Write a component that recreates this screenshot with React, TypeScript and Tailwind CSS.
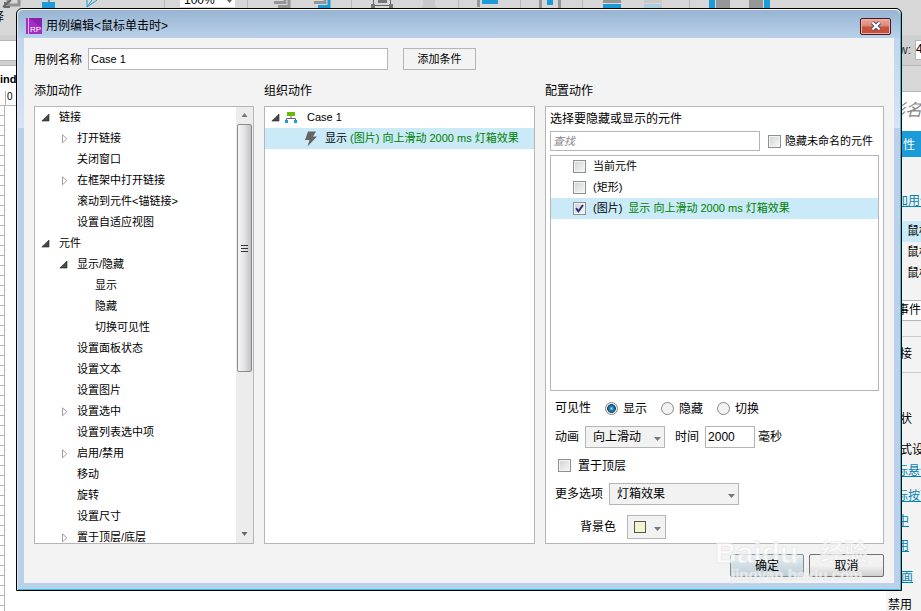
import React, { useState } from 'react';
import clsx from 'clsx';

type TreeItem = { label: string; level: 0 | 1 | 2; state?: 'open' | 'closed' };

const ACTIONS: TreeItem[] = [
  { label: '链接', level: 0, state: 'open' },
  { label: '打开链接', level: 1, state: 'closed' },
  { label: '关闭窗口', level: 1 },
  { label: '在框架中打开链接', level: 1, state: 'closed' },
  { label: '滚动到元件<锚链接>', level: 1 },
  { label: '设置自适应视图', level: 1 },
  { label: '元件', level: 0, state: 'open' },
  { label: '显示/隐藏', level: 1, state: 'open' },
  { label: '显示', level: 2 },
  { label: '隐藏', level: 2 },
  { label: '切换可见性', level: 2 },
  { label: '设置面板状态', level: 1 },
  { label: '设置文本', level: 1 },
  { label: '设置图片', level: 1 },
  { label: '设置选中', level: 1, state: 'closed' },
  { label: '设置列表选中项', level: 1 },
  { label: '启用/禁用', level: 1, state: 'closed' },
  { label: '移动', level: 1 },
  { label: '旋转', level: 1 },
  { label: '设置尺寸', level: 1 },
  { label: '置于顶层/底层', level: 1, state: 'closed' },
];

const INDENT = { 0: 'pl-1.5', 1: 'pl-6', 2: 'pl-[42px]' };

const Twisty = ({ state }: { state?: 'open' | 'closed' }) => (
  <svg width="10" height="10" viewBox="0 0 10 10" className="shrink-0">
    {state === 'open' && <path d="M8 1V8H0.8Z" fill="#4a4a4a" stroke="#222" strokeWidth="0.6" />}
    {state === 'closed' && <path d="M3.5 0.8V8.8L7.8 4.8Z" fill="#fff" stroke="#a0a0a0" />}
  </svg>
);

const DownArrow = () => (
  <svg width="9" height="5" viewBox="0 0 9 5" className="pointer-events-none absolute top-1/2 right-[3px]">
    <path d="M1 0H8L4.5 4Z" fill="#777" />
  </svg>
);

const CheckBox = ({ id, checked, onChange }: { id: string; checked: boolean; onChange: () => void }) => (
  <span className="relative size-[13px] shrink-0">
    <input
      id={id}
      type="checkbox"
      checked={checked}
      onChange={onChange}
      className="block size-[13px] appearance-none border border-[#8e8f8f] bg-linear-to-br from-[#cfd2d6] to-[#f8f8f8] shadow-[inset_0_0_0_1px_#f4f4f4]"
    />
    {checked && (
      <svg viewBox="0 0 13 13" className="pointer-events-none absolute inset-0 size-[13px]">
        <path d="M3 6.2L5.4 9.4L10 3" fill="none" stroke="#2b3177" strokeWidth="2" />
      </svg>
    )}
  </span>
);

const Panel = ({ title, className, children }: { title: string; className?: string; children: React.ReactNode }) => (
  <section className="flex min-h-0 min-w-0 flex-col">
    <h2 className="h-[26px] text-xs leading-[22px]">{title}</h2>
    <div className={clsx('flex min-h-0 flex-1 overflow-hidden border border-[#b5b5b5] bg-white', className)}>{children}</div>
  </section>
);

const ScrollBar = () => (
  <div className="flex w-[17px] shrink-0 flex-col items-center bg-[#ececec]">
    <svg width="7" height="17" viewBox="0 0 7 17"><path d="M0.5 10H6.5L3.5 6Z" fill="#777" /></svg>
    <div className="flex h-[248px] w-[15px] items-center justify-center rounded-xs border border-[#8b8b8b] bg-linear-to-r from-[#f6f6f6] via-[#e3e3e4] to-[#bfc1c4]">
      <svg width="7" height="9" viewBox="0 0 7 9"><path d="M0 1.5H7M0 4.5H7M0 7.5H7" stroke="#333" /></svg>
    </div>
    <svg width="7" height="17" viewBox="0 0 7 17" className="mt-auto"><path d="M0.5 6H6.5L3.5 10Z" fill="#666" /></svg>
  </div>
);

const Separator = ({ className }: { className: string }) => <span className={clsx('h-2 w-px shrink-0 bg-[#b8b8b8]', className)} />;

// Toolbar of the main window, behind the dialog
const Toolbar = () => (
  <div className="h-[35px] shrink-0 overflow-hidden bg-[#d7d7d7]">
    <div className="flex h-2.5 items-start">
      <svg width="20" height="8" viewBox="0 0 20 8" className="ml-0.5 shrink-0">
        <path d="M6 0V5H17V0" fill="none" stroke="#929292" strokeWidth="3" />
        <path d="M1 7L9 0M3 2V7H8" fill="none" stroke="#666" strokeWidth="2" />
      </svg>
      <svg width="14" height="8" viewBox="0 0 14 8" className="ml-5 shrink-0"><path d="M0 2H13V8H0Z" fill="#1b9bd8" /><path d="M6 0H8V2H6Z" fill="#888" /></svg>
      <svg width="12" height="8" viewBox="0 0 12 8" className="ml-[30px] shrink-0"><path d="M1 0V7L11 0M1 7L6 0" fill="none" stroke="#1b9bd8" /></svg>
      <Separator className="ml-[66px]" />
      <div className="ml-[15px] flex h-[7px] w-[55px] shrink-0 items-end overflow-hidden bg-white pl-1 text-xs leading-[14px]">
        100%<svg width="5" height="7" viewBox="0 0 5 7" className="ml-3"><path d="M0 0H5L2.5 3Z" fill="#666" /></svg>
      </div>
      <Separator className="ml-3" />
      <svg width="17" height="8" viewBox="0 0 17 8" className="ml-[26px] shrink-0"><path d="M0 2.5H11V0M4 6.5H15V0" fill="none" stroke="#969696" strokeWidth="3" /></svg>
      <svg width="17" height="8" viewBox="0 0 17 8" className="ml-[23px] shrink-0"><path d="M0 2.5H11V0" fill="none" stroke="#969696" strokeWidth="3" /><path d="M4 6.5H15V0" fill="none" stroke="#1b9bd8" strokeWidth="3" /></svg>
      <Separator className="ml-5" />
      <svg width="22" height="8" viewBox="0 0 22 8" className="ml-[19px] shrink-0"><path d="M2.5 0V5.5H19.5V0" fill="none" stroke="#666" /><path d="M7 0H16V3H7ZM0 4H4V8H0ZM18 4H22V8H18Z" fill="#777" /></svg>
      <svg width="14" height="8" viewBox="0 0 14 8" className="ml-[29px] shrink-0"><path d="M1 0H13V6H14V8H0V6H1Z" fill="#c9c9c9" /></svg>
      <Separator className="ml-[22px]" />
      <svg width="22" height="8" viewBox="0 0 22 8" className="ml-[18px] shrink-0"><path d="M0 0H3V7H0Z" fill="#969696" /><path d="M5 0H21V4H5Z" fill="#1b9bd8" /></svg>
      <Separator className="ml-[21px]" />
      <svg width="22" height="8" viewBox="0 0 22 8" className="ml-[18px] shrink-0"><path d="M0 0H3V8H0ZM19 0H22V8H19Z" fill="#969696" /><path d="M8 0H14V5H8Z" fill="#1b9bd8" /></svg>
      <Separator className="ml-[21px]" />
      <svg width="18" height="8" viewBox="0 0 18 8" className="ml-5 shrink-0"><path d="M0 0H18V3H0Z" fill="#969696" /><path d="M0 4H18V8H0Z" fill="#1b9bd8" /></svg>
      <svg width="18" height="8" viewBox="0 0 18 8" className="ml-[23px] shrink-0"><path d="M0 0H18V3H0Z" fill="#c9c9c9" /><path d="M0 4H18V8H0Z" fill="#adcfdd" /></svg>
      <Separator className="ml-[27px]" />
      <svg width="21" height="8" viewBox="0 0 21 8" className="ml-[19px] shrink-0"><path d="M0 0H6V8H0Z" fill="#1b9bd8" /><path d="M7 0H21V8H7Z" fill="#969696" /></svg>
      <svg width="21" height="8" viewBox="0 0 21 8" className="ml-[19px] shrink-0"><path d="M0 0H14V8H0Z" fill="#969696" /><path d="M15 0H21V8H15Z" fill="#1b9bd8" /></svg>
    </div>
    <div className="flex w-1 justify-end overflow-hidden leading-[14px]">择</div>
  </div>
);

const Workspace = () => (
  <div className="flex h-full flex-col overflow-hidden bg-white text-xs whitespace-nowrap">
    <Toolbar />
    <div className="flex h-[31px] shrink-0 items-center justify-between border-b border-[#b5b5b5] bg-[#cfcfcf]">
      <span className="h-[21px] w-12 border-y border-[#b5b5b5] bg-white" />
      <span className="flex items-center gap-1 text-[#333]">w:<span className="h-5 w-1.5 overflow-hidden border border-r-0 border-[#b5b5b5] bg-white text-black">4</span></span>
    </div>
    <div className="flex min-h-0 flex-1">
      <div className="flex min-w-0 flex-1 flex-col">
        <div className="h-[25px] text-[11px] leading-[26px] font-bold">index</div>
        <div className="flex h-[15px] border-b border-[#b5b5b5] pl-[5px]"><span className="border-l border-[#b5b5b5] pl-px text-[10px] leading-3">0</span></div>
        <div className="w-[5px] flex-1 border-r border-[#b5b5b5] bg-[repeating-linear-gradient(to_bottom,#fff_0,#fff_9px,#b5b5b5_9px,#b5b5b5_10px)]" />
      </div>
      <aside className="flex w-[35px] shrink-0 flex-col overflow-hidden bg-[#f3f3f3] *:shrink-0">
        <div className="h-[26px] border-b border-[#b5b5b5] bg-[#d8d8d8]" />
        <div className="h-[39px] bg-white pl-0.5 text-[17px] leading-[38px] text-[#888] italic">形名</div>
        <div className="h-[26px] bg-[#1b9bd8] pl-[5px] leading-[28px] text-white">属性</div>
        <a href="#case" className="mt-[34px] h-5 pl-2.5 leading-5 text-[#0083b3] underline">加用例</a>
        <ul className="mt-2.5 leading-[21px]">
          <li className="bg-[#c9eaf6] pl-[21px]">鼠标</li>
          <li className="pl-[21px]">鼠标</li>
          <li className="pl-[21px]">鼠标</li>
        </ul>
        <div className="mt-4 h-[21px] border-y border-[#b5b5b5] bg-white pl-[11px] leading-[19px]">事件</div>
        <div className="mt-[15px] h-[37px] border-y border-[#ccc] pl-3.5 leading-[35px]">接</div>
        <div className="mt-9 h-[21px] pl-3.5 leading-[21px]">状</div>
        <div className="mt-2.5 h-[21px] pl-3.5 leading-[21px]">式设</div>
        <a href="#hover" className="h-[25px] pl-2.5 leading-[21px] text-[#0083b3] underline">标悬停</a>
        <a href="#down" className="h-[25px] pl-2.5 leading-[21px] text-[#0083b3] underline">标按下</a>
        <a href="#selected" className="h-[25px] pl-[11px] leading-[21px] text-[#0083b3] underline">中</a>
        <a href="#disabled" className="h-[31px] pl-[11px] leading-[21px] text-[#0083b3] underline">用</a>
        <a href="#page" className="h-7 pl-[15px] leading-[21px] text-[#0083b3] underline">面</a>
        <div className="pl-0.5 leading-[21px]">禁用</div>
      </aside>
    </div>
  </div>
);

const ActionTree = () => (
  <Panel title="添加动作">
    <ul className="min-w-0 flex-1 text-[11px]">
      {ACTIONS.map((item, i) => (
        <li key={i} className={clsx('flex h-[21px] items-center gap-2', INDENT[item.level])}>
          <Twisty state={item.state} />
          {item.label}
        </li>
      ))}
    </ul>
    <ScrollBar />
  </Panel>
);

const CaseTree = () => (
  <Panel title="组织动作">
    <ul className="min-w-0 flex-1 text-[11px] whitespace-nowrap">
      <li className="flex h-[21px] items-center pl-1.5">
        <Twisty state="open" />
        <svg width="12" height="12" viewBox="0 0 12 12" className="ml-1 shrink-0">
          <path d="M2 0H10V4H2Z" fill="#6cb80e" />
          <path d="M6 4V6.5M1.5 9V6.5H10.5V9" fill="none" stroke="#666" />
          <path d="M0 8H3V11H0ZM9 8H12V11H9Z" fill="#1b9bd8" />
        </svg>
        <span className="ml-2.5">Case 1</span>
      </li>
      <li className="flex h-[21px] items-center bg-[#c9eaf6] pl-10">
        <svg width="12" height="16" viewBox="0 0 12 16" className="shrink-0">
          <path d="M3 0.5H11L8 5.5H12L2.5 15.5L4.5 9H0Z" fill="#646464" />
        </svg>
        <span className="ml-2">显示 <span className="text-[#008000]">(图片) 向上滑动 2000 ms 灯箱效果</span></span>
      </li>
    </ul>
  </Panel>
);

const ConfigPanel = () => {
  const [picked, setPicked] = useState([false, false, true]);
  const [hideUnnamed, setHideUnnamed] = useState(false);
  const [onTop, setOnTop] = useState(false);
  const [visibility, setVisibility] = useState('显示');
  const toggle = (i: number) => setPicked(picked.map((p, n) => (n === i ? !p : p)));

  return (
    <Panel title="配置动作" className="flex-col px-1 pb-1 text-xs whitespace-nowrap">
      <div className="h-6 leading-6">选择要隐藏或显示的元件</div>
      <div className="flex items-center text-[11px]">
        <input aria-label="查找" placeholder="查找" className="h-5 w-[210px] min-w-0 border border-[#b5b5b5] px-0.5 italic placeholder:text-[#888]" />
        <label htmlFor="unnamed" className="ml-2 flex items-center gap-1">
          <CheckBox id="unnamed" checked={hideUnnamed} onChange={() => setHideUnnamed(!hideUnnamed)} />
          隐藏未命名的元件
        </label>
      </div>
      <ul className="mt-1 min-h-0 flex-1 overflow-hidden border border-[#b5b5b5] text-[11px]">
        {['当前元件', '(矩形)', '(图片)'].map((name, i) => (
          <li key={name} className={clsx('flex h-[21px] items-center pl-[22px]', picked[i] && 'bg-[#c9eaf6]')}>
            <CheckBox id={`widget-${i}`} checked={picked[i]} onChange={() => toggle(i)} />
            <label htmlFor={`widget-${i}`} className="ml-[7px]">{name}</label>
            {i === 2 && <span className="ml-1.5 text-[#008000]">显示 向上滑动 2000 ms 灯箱效果</span>}
          </li>
        ))}
      </ul>

      <fieldset className="mt-[7px] flex h-[21px] items-center pl-[5px]">
        <legend className="float-left mr-3.5 leading-[21px]">可见性</legend>
        <div className="flex items-center gap-3.5">
          {['显示', '隐藏', '切换'].map(v => (
            <label key={v} className="flex items-center gap-[5px]">
              <input
                type="radio"
                name="visibility"
                checked={visibility === v}
                onChange={() => setVisibility(v)}
                className="size-[13px] appearance-none rounded-full border border-[#858585] bg-[#f2f2f2] checked:bg-[radial-gradient(circle_at_50%_50%,#8fdcf2_0,#2787b5_25%,#12456b_52%,#f2f2f2_60%)]"
              />
              {v}
            </label>
          ))}
        </div>
      </fieldset>

      <div className="mt-[7px] flex items-center pl-[5px]">
        <label htmlFor="animation">动画</label>
        <span className="relative ml-1.5">
          <select id="animation" className="block h-[22px] w-20 appearance-none border border-[#b5b5b5] bg-[#f2f2f2] pl-[7px]"><option>向上滑动</option></select>
          <DownArrow />
        </span>
        <label htmlFor="time" className="ml-2.5">时间</label>
        <input id="time" defaultValue="2000" className="ml-1.5 h-[22px] w-[50px] border border-[#b5b5b5] px-0.5" />
        <span className="ml-[3px]">毫秒</span>
      </div>

      <label htmlFor="ontop" className="mt-[7px] flex h-[21px] items-center gap-[7px] pl-2">
        <CheckBox id="ontop" checked={onTop} onChange={() => setOnTop(!onTop)} />
        置于顶层
      </label>

      <div className="mt-[7px] flex items-center pl-[5px]">
        <label htmlFor="more">更多选项</label>
        <span className="relative ml-1.5">
          <select id="more" className="block h-[22px] w-[130px] appearance-none border border-[#b5b5b5] bg-[#f2f2f2] pl-[7px]"><option>灯箱效果</option></select>
          <DownArrow />
        </span>
      </div>

      <div className="mt-2.5 flex items-center pl-[30px]">
        <span id="bg-label">背景色</span>
        <button aria-labelledby="bg-label" className="relative ml-[11px] flex h-6 w-[39px] items-center border border-[#b5b5b5] bg-[#f2f2f2] pl-1.5">
          <span className="size-3 border border-[#555] bg-[#f4f4cc]" />
          <DownArrow />
        </button>
      </div>
    </Panel>
  );
};

const CaseDialog = () => (
  <div
    role="dialog"
    aria-label="用例编辑"
    className="absolute top-2 right-[19px] bottom-5 left-4 flex flex-col overflow-hidden rounded-t-md border border-black bg-linear-to-b from-[#b9d1ea] from-40px to-[#d6e4f4] to-119px bg-[length:100%_119px] bg-no-repeat bg-[#b9d1ea] px-[7px] pb-[7px] shadow-[inset_0_1px_#fff,inset_1px_0_#dceaf8,inset_-1px_-1px_#2fc3dc]"
  >
    <header className="-mx-[6px] mt-px flex h-7 shrink-0 items-center rounded-t-md bg-linear-to-b from-[#98b4d2] to-[#b9d1ea] pt-1 pr-[9px] pl-2 text-xs">
      <svg width="16" height="16" viewBox="0 0 16 16" className="shrink-0">
        <path d="M0 0H16V16H0Z" fill="#a52cc4" />
        <path d="M3 0H16V10Z" fill="#8b22ad" />
        <path d="M2.5 0V16" stroke="#e2b5ee" />
        <text x="4" y="14" fontSize="8" fill="#fff" fontFamily="Liberation Sans, sans-serif">RP</text>
      </svg>
      <h1 className="ml-1">用例编辑&lt;鼠标单击时&gt;</h1>
      <button aria-label="关闭" className="ml-auto flex h-[17px] w-[31px] items-center justify-center rounded-xs border border-[#4b1420] bg-linear-to-b from-[#e9a99d] from-0% via-[#d98878] via-45% to-[#c5513a] to-55% shadow-[inset_0_0_0_1px_#eab4a9]">
        <svg width="12" height="10" viewBox="0 0 12 10">
          <path d="M2.5 1.5L9.5 8.5M9.5 1.5L2.5 8.5" stroke="#4a4d5c" strokeWidth="4" />
          <path d="M2.5 1.5L9.5 8.5M9.5 1.5L2.5 8.5" stroke="#fff" strokeWidth="2.2" />
        </svg>
      </button>
    </header>

    <main className="flex min-h-0 flex-1 flex-col bg-[#f3f3f3] px-2.5 pt-2.5 pb-1.5">
      <div className="flex items-center text-xs">
        <label htmlFor="case-name" className="mr-1.5 pt-0.5">用例名称</label>
        <input id="case-name" defaultValue="Case 1" className="h-[22px] w-[300px] border border-[#b5b5b5] bg-white px-0.5 text-[11px]" />
        <button className="ml-[15px] h-[22px] w-[73px] border border-[#b5b5b5] bg-[#f3f3f3] text-[11px]">添加条件</button>
      </div>
      <div className="mt-2.5 grid min-h-0 flex-1 grid-cols-[220px_271fr_339fr] grid-rows-[minmax(0,1fr)] gap-2.5">
        <ActionTree />
        <CaseTree />
        <ConfigPanel />
      </div>
      <footer className="relative mt-2.5 flex justify-end gap-[5px] text-xs">
        <button className="h-[23px] w-[74px] rounded-xs border border-[#7f8f99] bg-linear-to-b from-[#e6eef2] to-[#bccdd6]"><span className="relative z-10">确定</span></button>
        <button className="h-[23px] w-[75px] rounded-xs border border-[#707070] bg-linear-to-b from-[#f2f2f2] from-50% to-[#cfcfcf]"><span className="relative z-10">取消</span></button>
        {/* Watermark over the lower right corner */}
        <div className="pointer-events-none absolute right-4 -bottom-1 w-[153px] font-bold whitespace-nowrap text-white opacity-75 [-webkit-text-stroke:1px_#e8e8e8]">
          <div className="flex justify-between text-3xl leading-8"><span>Baidu</span><span className="text-2xl leading-8">经验</span></div>
          <div className="pl-4 text-[15px] leading-3">jingyan.baidu.com</div>
        </div>
      </footer>
    </main>
  </div>
);

export default function App() {
  return (
    <div className="relative h-screen overflow-hidden font-['Liberation_Sans','Noto_Sans_CJK_SC',sans-serif] text-black">
      <Workspace />
      <CaseDialog />
    </div>
  );
}
